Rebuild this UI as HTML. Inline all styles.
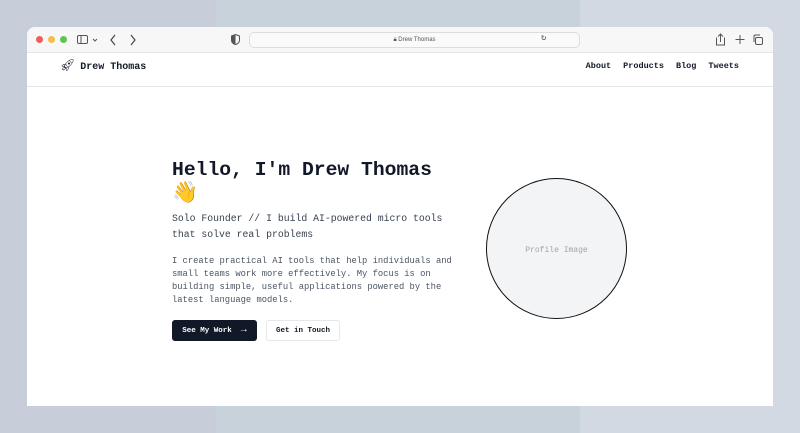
<!DOCTYPE html>
<html><head><meta charset="utf-8"><style>
*{margin:0;padding:0;box-sizing:border-box}
body{width:800px;height:433px;overflow:hidden;position:relative;background:linear-gradient(90deg,#c8ced9 0,#c8ced9 27%,#c8d2db 27%,#c8d2db 72.5%,#d3d9e2 72.5%);font-family:"Liberation Mono",monospace;color:#111827}
.win{position:absolute;left:27px;top:27px;width:746px;height:379px;background:#fff;border-radius:8px 8px 0 0;overflow:hidden}
.tb{height:26px;background:#f7f7f8;border-bottom:1px solid #e6e6e8;position:relative}
.dot{position:absolute;top:9px;width:7px;height:7px;border-radius:50%}
.url{position:absolute;left:222px;top:5px;width:331px;height:16px;border:1px solid #ddd;border-radius:5px;background:#fafafa;font:6px "Liberation Sans",sans-serif;color:#555;text-align:center;line-height:14px}
.nav{height:34px;border-bottom:1px solid #e5e7eb;position:relative}
.logo{position:absolute;left:33px;top:1px;font-weight:bold;font-size:10px;line-height:24px}
.links{position:absolute;right:34px;top:1px;font-size:8.5px;font-weight:bold;line-height:24px}
.links span{margin-left:12px}
h1{position:absolute;left:145px;top:131px;font-size:19.7px;line-height:24px;font-weight:bold}
.sub{position:absolute;left:145px;top:184px;font-size:9.8px;line-height:15.5px;color:#374151;width:285px}
.p{position:absolute;left:145px;top:228px;font-size:8.8px;line-height:13px;color:#4b5563;width:300px}
.b1,.b2{position:absolute;top:293px;height:21px;border-radius:3px;font-size:7.5px;font-weight:bold;display:flex;align-items:center;justify-content:center}
.b1{left:145px;width:85px;background:#111827;color:#fff}
.b2{left:239px;width:74px;border:1px solid #e5e7eb}
.circ{position:absolute;left:459px;top:151px;width:141px;height:141px;border-radius:50%;border:1.5px solid #111;background:#f3f4f6;color:#9ca3af;font-size:8px;display:flex;align-items:center;justify-content:center;padding-top:3px}
</style></head><body>
<div class="win">
<div class="tb">
<div class="dot" style="left:9px;background:#ed5f57"></div>
<div class="dot" style="left:21px;background:#f5bd4f"></div>
<div class="dot" style="left:33px;background:#5fc454"></div>
<svg style="position:absolute;left:50px;top:7px" width="22" height="12" viewBox="0 0 22 12" fill="none" stroke="#555" stroke-width="1"><rect x="0.5" y="1.5" width="10" height="8" rx="1.5"/><line x1="4" y1="1.5" x2="4" y2="9.5"/><path d="M16 5l2 2 2-2"/></svg>
<svg style="position:absolute;left:82px;top:7px" width="30" height="12" viewBox="0 0 30 12" fill="none" stroke="#444" stroke-width="1.2"><path d="M6 1l-4 5 4 5"/><path d="M22 1l4 5-4 5"/></svg>
<svg style="position:absolute;left:204px;top:7px" width="9" height="11" viewBox="0 0 9 11"><path d="M4.5 0.5L8.5 2v4c0 2.5-2 4-4 4.5C2.5 10 0.5 8.5 0.5 6V2z" fill="none" stroke="#555"/><path d="M4.5 0.5V10.5C2.5 10 0.5 8.5 0.5 6V2z" fill="#555"/></svg>
<div class="url">🔒︎ Drew Thomas</div>
<div style="position:absolute;left:514px;top:6px;font-size:9px;color:#555">↻</div>
<svg style="position:absolute;left:688px;top:6px" width="50" height="13" viewBox="0 0 50 13" fill="none" stroke="#555" stroke-width="1"><path d="M2 5h-0.5v7h8v-7h-0.5M5.5 9V1M3 3.5l2.5-2.5 2.5 2.5"/><path d="M25 2v9M20.5 6.5h9"/><rect x="40.5" y="4.5" width="7" height="7" rx="1.5"/><path d="M39 9V3.5a1.5 1.5 0 0 1 1.5-1.5H45"/></svg>
</div>
<div class="nav">
<div class="logo"><span style="font-weight:normal;font-size:12px;margin-right:5px">🚀︎</span>Drew Thomas</div>
<div class="links"><span>About</span><span>Products</span><span>Blog</span><span>Tweets</span></div>
</div>
<h1>Hello, I'm Drew Thomas<br><span style="font-size:21px">👋</span></h1>
<div class="sub">Solo Founder // I build AI-powered micro tools that solve real problems</div>
<div class="p">I create practical AI tools that help individuals and small teams work more effectively. My focus is on building simple, useful applications powered by the latest language models.</div>
<div class="b1">See My Work &nbsp;<span style="font-size:10px">→</span></div>
<div class="b2">Get in Touch</div>
<div class="circ">Profile Image</div>
</div>
</body></html>
